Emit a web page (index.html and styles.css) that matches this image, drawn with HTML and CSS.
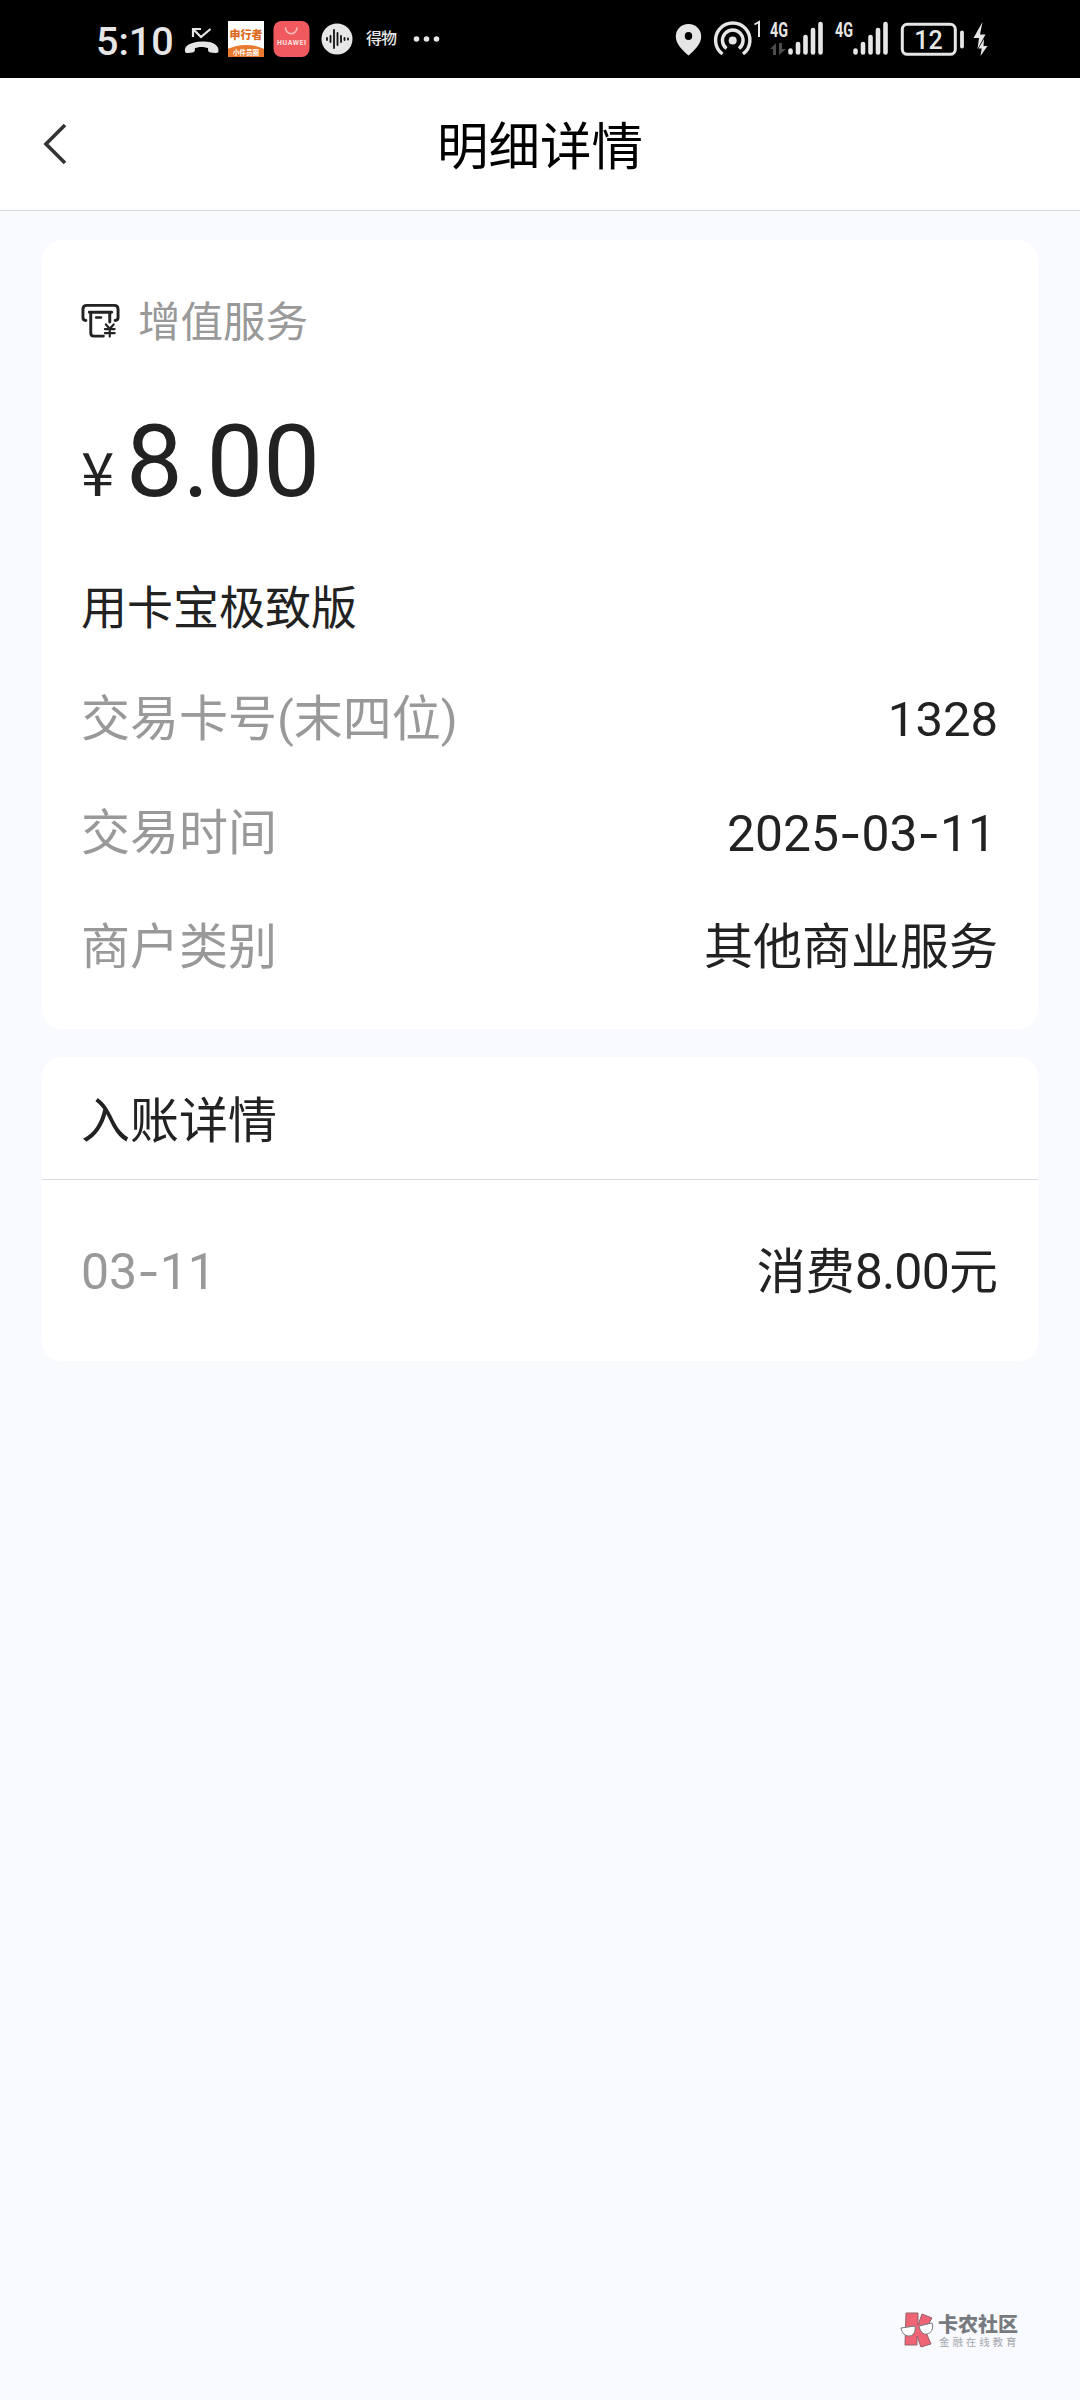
FILE: index.html
```html
<!DOCTYPE html>
<html lang="zh-CN">
<head>
<meta charset="utf-8">
<title>明细详情</title>
<link rel="stylesheet" href="styles.css">
</head>
<body>
<div class="status">
  <div class="status-group">
    <span class="clock">5:10</span>
    <svg width="40" height="78" viewBox="184 0 40 78">
      <path d="M185 51c-1-5 5-9 17-9.500s17 4.500 16.500 9.500c0 2-2 2-3.500 2l-4.500-.6c-2-.3-2.500-1-2.500-4.400-5-1.500-8-1.500-13 0 0 3.400-.5 4-2.500 4.400l-4.500.6c-1.500 0-3 0-3-2z" fill="#e6e6e6"/>
      <path d="M193 37v-8h8M193.500 29.500l7.500 7.500 9.500-8" fill="none" stroke="#e6e6e6" stroke-width="2.200"/>
    </svg>
    <svg width="44" height="78" viewBox="224 0 44 78">
      <clipPath id="tile"><path d="M228 21h36v36h-36z"/></clipPath>
      <path d="M228 21h36v36h-36z" fill="#fff"/>
      <ellipse cx="246" cy="60" rx="27" ry="15" fill="#e8792f" clip-path="url(#tile)"/>
      <text x="246" y="39" class="tile-name">申行者</text>
      <text x="246" y="55" class="tile-sub">小件员圈</text>
    </svg>
    <svg width="48" height="78" viewBox="268 0 48 78">
      <rect x="273.500" y="21" width="36" height="36" rx="8" fill="#f05a5e"/>
      <path d="M285.500 28a5.700 5.700 0 0 0 11.400 0" fill="none" stroke="#ffc2c2" stroke-width="1.600" stroke-linecap="round"/>
      <text x="291.500" y="45" class="huawei" textLength="29">HUAWEI</text>
    </svg>
    <svg width="46" height="78" viewBox="316 0 46 78">
      <circle cx="337" cy="39" r="15.500" fill="#e6e6e6"/>
      <path d="M327 38v2M330.500 36v6M334 30v18M337.500 33v12M341 36v6M344.500 38v2M348 38.500v1" stroke="#111" stroke-width="1.800" stroke-linecap="round"/>
    </svg>
    <span class="dewu">得物</span>
    <svg width="30" height="78" viewBox="411 0 30 78" fill="#e6e6e6">
      <circle cx="416.500" cy="39" r="2.800"/><circle cx="426.500" cy="39" r="2.800"/><circle cx="436.500" cy="39" r="2.800"/>
    </svg>
  </div>
  <div class="status-group">
    <svg width="34" height="78" viewBox="674 0 34 78">
      <path fill="#e6e6e6" fill-rule="evenodd" d="M688.500 24c7.500 0 12.700 5.500 12.700 12.500 0 8-7.500 14.500-12.700 19-5.200-4.500-12.700-11-12.700-19 0-7 5.200-12.500 12.700-12.500zm0 8a3.700 4 0 1 0 0 8 3.700 4 0 1 0 0-8z"/>
    </svg>
    <svg width="60" height="78" viewBox="708 0 60 78">
      <g fill="none" stroke="#e6e6e6" stroke-width="3.400">
        <path d="M722.500 54a17.200 17.200 0 1 1 20.500 0"/>
        <path d="M726.500 48.500a10.300 10.300 0 1 1 12.500 0"/>
      </g>
      <circle cx="732.700" cy="40.500" r="4" fill="#e6e6e6"/>
      <path d="M754.500 24.500l4.500-2.500v15" fill="none" stroke="#e6e6e6" stroke-width="2"/>
    </svg>
    <svg width="65" height="78" viewBox="768 0 65 78">
      <text x="770" y="36.500" class="net" textLength="18" lengthAdjust="spacingAndGlyphs">4G</text>
      <path d="M770 49l6-6v12h-3v-6zM779 43h3v6h4l-7 6z" fill="#4d4d4d"/>
      <path d="M790.500 50.500v2M798 44v8.500M805.500 37v15.500M813 30v22.500M820.500 24v28.500" stroke="#e6e6e6" stroke-width="4.600" stroke-linecap="round"/>
    </svg>
    <svg width="64" height="78" viewBox="833 0 64 78">
      <text x="835" y="36.500" class="net" textLength="18" lengthAdjust="spacingAndGlyphs">4G</text>
      <path d="M855.500 50.500v2M863 44v8.500M870.500 37v15.500M878 30v22.500M885.500 24v28.500" stroke="#e6e6e6" stroke-width="4.600" stroke-linecap="round"/>
    </svg>
    <svg width="72" height="78" viewBox="897 0 72 78">
      <rect x="902.300" y="24.300" width="53" height="30" rx="5" fill="none" stroke="#e6e6e6" stroke-width="3"/>
      <path d="M962 32.500v14" stroke="#e6e6e6" stroke-width="3.800" stroke-linecap="round"/>
      <text x="928.500" y="48.500" class="level">12</text>
    </svg>
    <svg width="24" height="78" viewBox="969 0 24 78" fill="#e6e6e6">
      <path d="M982.500 22l-9 16h5.500l-1.500 11 8-14.500h-5.500z"/><path d="M984 39l-5.500 9.500h3.200l-1.200 7.500 7-10h-4z"/>
    </svg>
  </div>
</div>
<header class="nav">
  <svg class="back" width="30" height="48" viewBox="0 0 30 48"><path d="M25 5L6 24l19 19" fill="none" stroke="#333" stroke-width="3.600"/></svg>
  <h1 class="nav-title">明细详情</h1>
</header>
<main class="page">
  <section class="card summary">
    <div class="kind">
      <svg width="39" height="36" viewBox="0 0 40 36" fill="none" stroke="#222" stroke-width="3" stroke-linecap="round">
        <path d="M5 17.500c-2 0-3-1.500-3-3V6c0-2.500 1.500-4 4-4h28c2.500 0 4 1.500 4 4v8.500c0 1.500-1 3-3 3"/>
        <path d="M8.500 9h23M10 9v21c0 2 1 3.500 3 3.500h10M29.500 9v10"/>
        <path d="M15.500 14.500h5" stroke-width="2.500"/>
        <path d="M25.500 21.500l4 4.500 4-4.500M29.500 26v8M24.500 26.300h10M24.500 30.500h10" stroke-width="2.200"/>
      </svg>
      <span class="kind-name">增值服务</span>
    </div>
    <div class="amount"><span class="yen">¥</span><span class="number">8<span class="dot">.</span>00</span></div>
    <div class="product">用卡宝极致版</div>
    <div class="row"><span class="label">交易卡号(末四位)</span><span class="value">1328</span></div>
    <div class="row"><span class="label">交易时间</span><span class="value date">2025<span class="dash">-</span>03<span class="dash">-</span>11</span></div>
    <div class="row"><span class="label">商户类别</span><span class="value">其他商业服务</span></div>
  </section>
  <section class="card posting">
    <h2 class="posting-title">入账详情</h2>
    <div class="posting-row"><span class="label">03<span class="dash">-</span>11</span><span class="value">消费<span class="sum">8.00</span>元</span></div>
  </section>
</main>
<footer class="brand">
  <svg width="36" height="38" viewBox="0 0 36 38">
    <g fill="#ee6475" stroke="#94606a" stroke-width="1">
      <path d="M7 2h12v12l4-11 10 4-7 12 6 14-10 3-4-11v9H6z"/>
    </g>
    <g fill="#fff" stroke="#737880" stroke-width="1">
      <path d="M2 17l14-2c1 6-2 10-6 10s-7-3-8-8zM20 15l13-3c2 6-1 10-5 11s-7-3-8-8z"/>
    </g>
  </svg>
  <div class="brand-text"><span class="brand-name">卡农社区</span><span class="brand-sub">金融在线教育</span></div>
</footer>
</body>
</html>
```
FILE: styles.css
```css
* { box-sizing: border-box; margin: 0; }
body {
  width: 1080px;
  height: 2400px;
  display: flex;
  flex-direction: column;
  background: #f9fafe;
  color: #222;
  font-family: Roboto, "Noto Sans CJK SC", sans-serif;
  font-size: 49px;
}
svg { display: block; flex: none; }
.status {
  height: 78px;
  padding: 0 87px 0 96px;
  display: flex;
  justify-content: space-between;
  background: #000;
  color: #e6e6e6;
}
.status-group { display: flex; align-items: center; }
.clock { width: 88px; padding-top: 6px; font-size: 39.500px; font-weight: 500; line-height: 1; white-space: nowrap; }
.dewu { width: 49px; padding-left: 4px; font-size: 16px; font-weight: 500; letter-spacing: -1px; line-height: 1; white-space: nowrap; }
.tile-name { font-size: 11px; font-weight: 900; text-anchor: middle; fill: #dc6b22; }
.tile-sub { font-size: 6.500px; font-weight: 700; text-anchor: middle; fill: #fff; }
.huawei { font-size: 7px; font-weight: 700; text-anchor: middle; fill: #ffe0e0; }
.net { font-size: 20px; font-weight: 700; fill: #e6e6e6; }
.level { font-size: 25px; font-weight: 500; text-anchor: middle; fill: #e6e6e6; }
.nav {
  height: 133px;
  padding: 0 40px;
  display: grid;
  grid-template-columns: 30px 1fr 30px;
  align-items: center;
  background: #fff;
  border-bottom: 1px solid #d6d9de;
}
.nav-title { text-align: center; color: #000; font-size: 51.500px; font-weight: 400; line-height: 1; padding-top: 8px; }
.page { padding: 29px 42px 0; display: flex; flex-direction: column; gap: 28px; }
.card { background: #fff; border-radius: 20px; }
.summary { height: 789px; padding: 54px 40px 0 39px; }
.kind { height: 54px; display: flex; align-items: center; gap: 18px; color: #999; }
.kind-name { padding-top: 4px; font-size: 42.500px; line-height: 1; }
.amount { height: 206px; padding-top: 63px; display: flex; align-items: baseline; line-height: 1; }
.yen { width: 45px; font-family: "Noto Sans CJK SC", sans-serif; font-size: 60px; }
.number { font-size: 101px; }
.dot { letter-spacing: -3px; }
.product { height: 108px; font-size: 46px; line-height: 108px; }
.row { height: 114px; display: flex; justify-content: space-between; line-height: 116px; }
.label { color: #999; }
.value { color: #222; }
.date { padding-right: 2px; font-size: 49.800px; }
.dash { font-family: Inter, sans-serif; font-size: 49px; line-height: 1; }
.posting { height: 304px; }
.posting-title { height: 123px; padding-left: 39px; border-bottom: 1px solid #d9dcdf; font-size: 49px; font-weight: 400; line-height: 130px; }
.posting-row { height: 181px; padding: 0 40px 0 39px; display: flex; justify-content: space-between; line-height: 185px; }
.posting-row .label { font-size: 50px; }
.sum { font-size: 50px; letter-spacing: -0.800px; }
.brand { margin-top: auto; margin-left: 899px; padding-bottom: 51px; display: flex; align-items: center; gap: 3px; white-space: nowrap; }
.brand-text { display: flex; flex-direction: column; gap: 1px; padding-top: 1px; }
.brand-name { color: #777a80; font-size: 20px; font-weight: 900; line-height: 22px; }
.brand-sub { padding-left: 1px; color: #a4a7ae; font-size: 10.500px; letter-spacing: 2.900px; line-height: 11px; }
```
